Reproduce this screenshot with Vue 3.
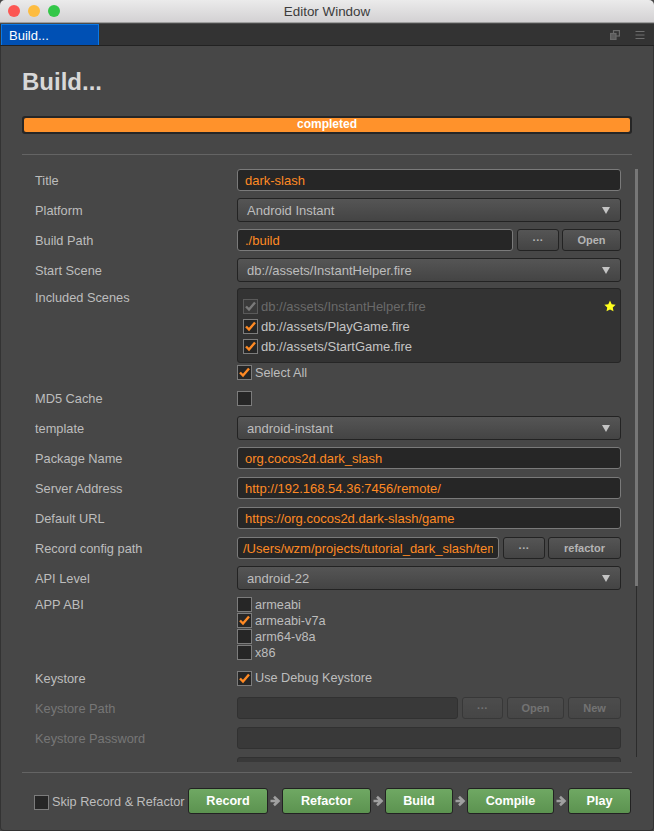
<template>
  <div class="win">
    <div class="titlebar">
      <div class="lights">
        <span class="light light--red"></span>
        <span class="light light--yellow"></span>
        <span class="light light--green"></span>
      </div>
      <div class="titlebar__text">Editor Window</div>
    </div>

    <div class="tabs">
      <div class="tab">Build...</div>
      <div class="tabs__tools">
        <svg width="10" height="10" viewBox="0 0 10 10" fill="none" stroke="#6a6a6a" stroke-width="1.2">
          <rect x="3.500" y="0.600" width="5.900" height="5.400" />
          <rect x="0.600" y="3.500" width="5.400" height="5.900" fill="#5c5c5c" />
        </svg>
        <svg width="10" height="10" viewBox="0 0 10 10" fill="none" stroke="#6e6e6e" stroke-width="1.2">
          <path d="M0.500 1.500h9M0.500 5h9M0.500 8.500h9" />
        </svg>
      </div>
    </div>

    <div class="body">
      <h1 class="heading">Build...</h1>
      <div class="progress"><div class="progress__fill">completed</div></div>
      <div class="rule"></div>

      <div class="scroll">
        <div class="form">
          <div class="row">
            <div class="label">Title</div>
            <div class="input input--on">dark-slash</div>
          </div>
          <div class="row">
            <div class="label">Platform</div>
            <div class="select">Android Instant<span class="caret"></span></div>
          </div>
          <div class="row">
            <div class="label">Build Path</div>
            <div class="input input--on grow">./build</div>
            <button class="btn btn--dots">···</button>
            <button class="btn btn--open">Open</button>
          </div>
          <div class="row">
            <div class="label">Start Scene</div>
            <div class="select">db://assets/InstantHelper.fire<span class="caret"></span></div>
          </div>

          <div class="row row--top row--scenes">
            <div class="label">Included Scenes</div>
            <div class="grow">
              <div class="scenes">
                <div v-for="s in scenes" :key="s.name" class="scene" :class="{ 'scene--off': s.off }">
                  <span class="check" :class="{ 'check--off': s.off }">
                    <svg width="13" height="13" viewBox="0 0 13 13"><path d="M2 6.5l3 3 6-7" fill="none" stroke="currentColor" stroke-width="2.4" /></svg>
                  </span>
                  <span class="scene__name">{{ s.name }}</span>
                  <svg v-if="s.off" class="star" width="12" height="12" viewBox="0 0 24 24"><path d="M12 1l3.4 7.3 7.9 1-5.8 5.5 1.5 7.9-7-3.9-7 3.9 1.5-7.9L.7 9.300l7.900-1z" fill="#ffff1e" /></svg>
                </div>
              </div>
              <div class="checkline checkline--all">
                <span class="check">
                  <svg width="13" height="13" viewBox="0 0 13 13"><path d="M2 6.5l3 3 6-7" fill="none" stroke="currentColor" stroke-width="2.4" /></svg>
                </span>
                Select All
              </div>
            </div>
          </div>

          <div class="row">
            <div class="label">MD5 Cache</div>
            <span class="check"></span>
          </div>
          <div class="row">
            <div class="label">template</div>
            <div class="select">android-instant<span class="caret"></span></div>
          </div>
          <div class="row">
            <div class="label">Package Name</div>
            <div class="input input--on">org.cocos2d.dark_slash</div>
          </div>
          <div class="row">
            <div class="label">Server Address</div>
            <div class="input input--on">http://192.168.54.36:7456/remote/</div>
          </div>
          <div class="row">
            <div class="label">Default URL</div>
            <div class="input input--on">https://org.cocos2d.dark-slash/game</div>
          </div>
          <div class="row">
            <div class="label">Record config path</div>
            <div class="input input--on input--path grow"><span class="input__clip">/Users/wzm/projects/tutorial_dark_slash/tem</span></div>
            <button class="btn btn--dots">···</button>
            <button class="btn btn--refactor">refactor</button>
          </div>
          <div class="row">
            <div class="label">API Level</div>
            <div class="select">android-22<span class="caret"></span></div>
          </div>

          <div class="row row--top row--abi">
            <div class="label">APP ABI</div>
            <div class="abi">
              <div v-for="a in abis" :key="a.name" class="checkline">
                <span class="check">
                  <svg v-if="a.on" width="13" height="13" viewBox="0 0 13 13"><path d="M2 6.5l3 3 6-7" fill="none" stroke="currentColor" stroke-width="2.4" /></svg>
                </span>
                {{ a.name }}
              </div>
            </div>
          </div>

          <div class="row">
            <div class="label">Keystore</div>
            <div class="checkline checkline--mid">
              <span class="check">
                <svg width="13" height="13" viewBox="0 0 13 13"><path d="M2 6.5l3 3 6-7" fill="none" stroke="currentColor" stroke-width="2.4" /></svg>
              </span>
              Use Debug Keystore
            </div>
          </div>
          <div class="row row--off row--keypath">
            <div class="label">Keystore Path</div>
            <div class="input grow"></div>
            <button class="btn btn--dots">···</button>
            <button class="btn btn--open">Open</button>
            <button class="btn btn--new">New</button>
          </div>
          <div class="row row--off">
            <div class="label">Keystore Password</div>
            <div class="input"></div>
          </div>
          <div class="row row--off">
            <div class="label"></div>
            <div class="input"></div>
          </div>
        </div>
        <div class="scrollbar"><div class="scrollbar__thumb"></div></div>
      </div>

      <div class="rule rule--foot"></div>

      <div class="foot">
        <div class="checkline checkline--mid checkline--skip">
          <span class="check"></span>
          Skip Record &amp; Refactor
        </div>
        <div class="steps">
          <template v-for="(s, i) in steps" :key="s.name">
            <svg v-if="i" class="arrow" width="14" height="12" viewBox="0 0 14 12">
              <path d="M2.500 6h7.500M6 1.800L10.500 6 6 10.200" fill="none" stroke="#a0a0a0" stroke-width="2.600" />
            </svg>
            <button class="go" :style="{ width: s.width + 'px' }">{{ s.name }}</button>
          </template>
        </div>
      </div>
    </div>
  </div>
</template>

<script setup>
const scenes = [
  { name: 'db://assets/InstantHelper.fire', off: true },
  { name: 'db://assets/PlayGame.fire' },
  { name: 'db://assets/StartGame.fire' },
]

const abis = [
  { name: 'armeabi' },
  { name: 'armeabi-v7a', on: true },
  { name: 'arm64-v8a' },
  { name: 'x86' },
]

const steps = [
  { name: 'Record', width: 80 },
  { name: 'Refactor', width: 89 },
  { name: 'Build', width: 68 },
  { name: 'Compile', width: 87 },
  { name: 'Play', width: 63 },
]
</script>

<style scoped>
.win {
  width: 654px;
  height: 831px;
  display: flex;
  flex-direction: column;
  overflow: hidden;
  background: #474747;
  font-family: "Liberation Sans", Arial, sans-serif;
  font-size: 13px;
  color: #bdbdbd;
  border-radius: 5px 5px 0 0;
}

.titlebar {
  position: relative;
  height: 22px;
  flex: none;
  display: flex;
  align-items: center;
  justify-content: center;
  background: linear-gradient(#ebebeb, #d3d1d3);
  border-bottom: 1px solid #9e9e9e;
}

.titlebar__text {
  font-size: 13.4px;
  color: #3c3c3c;
}

.lights {
  position: absolute;
  left: 8px;
  top: 5px;
  display: flex;
  gap: 8px;
}

.light {
  width: 12px;
  height: 12px;
  border-radius: 50%;
}

.light--red { background: #fc5753; }
.light--yellow { background: #fdbc40; }
.light--green { background: #33c748; }

.tabs {
  height: 23px;
  flex: none;
  display: flex;
  background: #333;
  border-top: 1px solid #4c4c4c;
  border-bottom: 1px solid #222;
  box-sizing: border-box;
}

.tab {
  width: 98px;
  margin-left: 1px;
  box-sizing: border-box;
  background: #0050b4;
  border: 1px solid #0a78e6;
  border-bottom: none;
  padding-left: 7px;
  line-height: 21px;
  color: #fff;
  font-size: 13px;
}

.tabs__tools {
  margin-left: auto;
  padding-right: 9px;
  display: flex;
  align-items: center;
  gap: 15px;
}

.body {
  flex: 1;
  display: flex;
  flex-direction: column;
  padding: 0 21px;
  min-height: 0;
  border-left: 1px solid #333;
  border-right: 1px solid #333;
  border-bottom: 1px solid #333;
  border-radius: 0 0 4px 4px;
  box-sizing: border-box;
}

.heading {
  margin: 21px 0 0;
  height: 49px;
  padding-bottom: 10px;
  font-size: 24px;
  line-height: 30px;
  font-weight: 700;
  color: #d8d8d8;
}

.progress {
  height: 18px;
  box-sizing: border-box;
  background: #262626;
  border-radius: 3px;
  padding: 2px;
}

.progress__fill {
  height: 14px;
  line-height: 13px;
  text-align: center;
  background: #ff922b;
  border-radius: 2px;
  color: #fff;
  font-weight: 700;
  font-size: 12px;
}

.rule {
  height: 1px;
  flex: none;
  margin-top: 20px;
  background: #646464;
}

.rule--foot {
  margin-top: 10px;
}

.scroll {
  position: relative;
  flex: none;
  height: 597px;
  margin-top: 10px;
  margin-right: -6px;
  overflow: hidden;
}

.form {
  padding-left: 13px;
  padding-right: 17px;
}

.row {
  min-height: 30px;
  display: flex;
  align-items: center;
  gap: 3px;
}

.row--top {
  align-items: flex-start;
}

.row--scenes {
  padding-top: 3px;
  padding-bottom: 2px;
  box-sizing: border-box;
}

.row--abi {
  padding-top: 4px;
  padding-bottom: 2px;
}

.row--off {
  opacity: 0.4;
}

.row--keypath {
  gap: 4px;
}

.label {
  width: 199px;
  flex: none;
  padding-top: 1px;
  line-height: 16px;
  font-size: 12.8px;
}

.row--keypath .label {
  width: 198px;
}

.row--scenes .label {
  padding-top: 2px;
}

.row--abi .label {
  padding-top: 0;
}

.grow {
  flex: 1;
  min-width: 0;
}

.input {
  flex: 1;
  height: 22px;
  box-sizing: border-box;
  min-width: 0;
  padding: 0 7px;
  line-height: 21px;
  background: #262626;
  border: 1px solid #7a7a7a;
  border-radius: 3px;
  white-space: nowrap;
  overflow: hidden;
}

.row--off .input {
  background: #262626;
  border-color: #111;
}

.input--on {
  color: #ff8a24;
  font-weight: 500;
}

.input--path {
  padding: 0 5px;
}

.input__clip {
  display: block;
  overflow: hidden;
}

.select {
  flex: 1;
  height: 24px;
  box-sizing: border-box;
  position: relative;
  padding-left: 9px;
  line-height: 23px;
  background: linear-gradient(#555, #444);
  border: 1px solid #232323;
  border-radius: 3px;
}

.caret {
  position: absolute;
  right: 10px;
  top: 8px;
  border-left: 4px solid transparent;
  border-right: 4px solid transparent;
  border-top: 7px solid #c4c4c4;
}

.btn {
  height: 22px;
  flex: none;
  box-sizing: border-box;
  padding: 0;
  background: linear-gradient(#555, #444);
  border: 1px solid #232323;
  border-radius: 3px;
  font-family: inherit;
  font-size: 11px;
  font-weight: 700;
  color: #b4b4b4;
}

.btn--dots { width: 42px; margin-left: 1px; }
.btn--open { width: 59px; }
.btn--refactor { width: 73px; }
.btn--new { width: 53px; }

.row--keypath .btn--dots { width: 41px; margin-left: 0; }
.row--keypath .btn--open { width: 57px; }

.scenes {
  height: 75px;
  box-sizing: border-box;
  padding: 7px 4px 0 5px;
  background: #333;
  border: 1px solid #262626;
  border-radius: 3px;
}

.scene {
  height: 20px;
  display: flex;
  align-items: center;
  gap: 3px;
  color: #c4c4c4;
}

.scene--off {
  color: #6a6a6a;
}

.star {
  margin-left: auto;
}

.check {
  width: 15px;
  height: 15px;
  flex: none;
  box-sizing: border-box;
  display: inline-flex;
  align-items: center;
  justify-content: center;
  background: #262626;
  border: 1px solid #7c7c7c;
  color: #ff8a24;
}

.check--off {
  background: #3a3a3a;
  border-color: #5a5a5a;
  color: #7a7a7a;
}

.checkline {
  height: 16px;
  display: flex;
  align-items: flex-start;
  gap: 3px;
  line-height: 17px;
  font-size: 12.7px;
}

.checkline--mid .check {
  margin-top: 1px;
}

.checkline--all {
  margin-top: 2px;
}

.foot {
  height: 57px;
  flex: none;
  display: flex;
  align-items: center;
}

.checkline--skip {
  margin-left: 12px;
  width: 154px;
  flex: none;
  white-space: nowrap;
}

.steps {
  display: flex;
  align-items: center;
  margin-bottom: 2px;
}

.arrow {
  flex: none;
}

.go {
  height: 26px;
  padding: 0;
  flex: none;
  background: linear-gradient(#6fa863, #5c9350);
  border: 1px solid #222;
  border-radius: 3px;
  font-family: inherit;
  font-size: 12.6px;
  font-weight: 700;
  color: #fff;
}

.scrollbar {
  position: absolute;
  right: 0;
  top: 4px;
  height: 588px;
  width: 3px;
  display: flex;
  justify-content: center;
}

.scrollbar::before {
  content: "";
  width: 1px;
  background: #2c2c2c;
}

.scrollbar__thumb {
  position: absolute;
  left: 0;
  top: 0;
  width: 3px;
  height: 417px;
  background: #777;
}
</style>

<style>
html, body {
  background: #474747;
}
</style>
